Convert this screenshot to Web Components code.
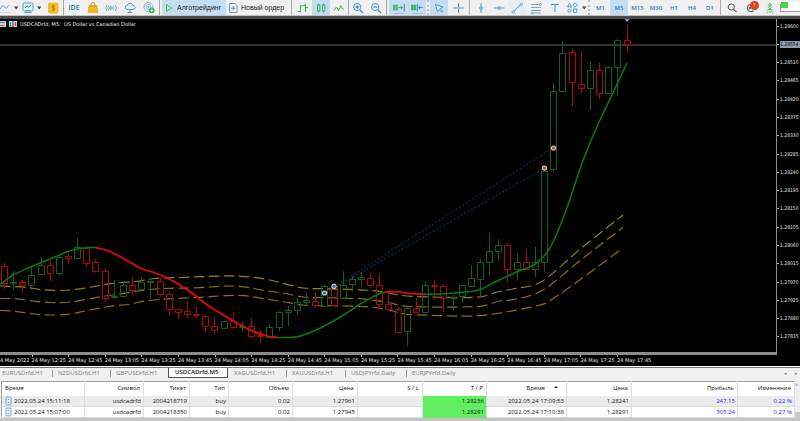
<!DOCTYPE html>
<html lang="ru">
<head>
<meta charset="utf-8">
<title>USDCADrfd, M5</title>
<style>
html,body{margin:0;padding:0}
body{font-family:"Open Sans","Noto Sans",sans-serif;font-size:6px;line-height:8px;background:#f0f0f0;color:#222}
</style>
</head>
<body>
<trade-terminal></trade-terminal>
<script>
const ICONS={
line:`<path d="M-1 9L3 4.5 6 7.500 9 4" fill="none" stroke="#5f9fc8"/><path d="M-1 11.500H10" stroke="#a9c4d6" stroke-width=".7"/>`,
caret:`<path d="M4 5.500h4.400L6.200 8.500z" fill="#444"/>`,
chart:`<rect x="1" y="2" width="10" height="8" rx="1.500" fill="#dff0f6" stroke="#4f9fc4"/><path d="M3 7L5 5 7 6.500 9 4" fill="none" stroke="#3cab62"/><path d="M3.500 9.500h5" stroke="#59b27d"/><path d="M2.500 11.500h7" stroke="#4f9fc4"/>`,
money:`<rect x="1.500" y="2" width="9.500" height="10" rx="1.200" fill="#f3c220" stroke="#e0a80c" stroke-width=".6"/><path d="M7.600 5.100C7 4.400 5 4.400 5 5.700c0 1.400 2.700.9 2.700 2.300C7.700 9.400 5.500 9.400 4.800 8.500M6.300 3.800v6.400" fill="none" stroke="#a9700a" stroke-width=".8"/>`,
bag:`<path d="M2 4.500h8L11 11.500H1z" fill="#f0b41e" stroke="#d99a12" stroke-width=".5"/><path d="M4 6V3.500a2 2 0 0 1 4 0V6" fill="none" stroke="#c98a14" stroke-width=".9"/>`,
signal:`<circle cx="6" cy="7" r="1.300" fill="none" stroke="#4d9ccb" stroke-width=".9"/><path d="M3.800 4.800a3.200 3.200 0 0 0 0 4.400M8.200 4.800a3.200 3.200 0 0 1 0 4.400M1.900 3.800a5 5 0 0 0 0 6.400M10.100 3.800a5 5 0 0 1 0 6.400" fill="none" stroke="#5ba3ce" stroke-width=".8"/>`,
cloud:`<path d="M3 8.500a2.200 2.200 0 0 1 .2-4.300A3 3 0 0 1 8.900 4.500 2 2 0 0 1 9.300 8.500z" fill="#e6f3fa" stroke="#4d9ccb"/><path d="M6 8.500V11M3.500 11.500h5" stroke="#4d9ccb"/>`,
globe:`<circle cx="5.500" cy="6" r="4.500" fill="none" stroke="#6fb0c8" stroke-width=".9"/><circle cx="5.500" cy="6" r="2.500" fill="none" stroke="#6fb0c8" stroke-width=".8"/><circle cx="5.500" cy="6" r="1" fill="#6fb0c8"/><circle cx="8.700" cy="9.300" r="2.900" fill="#35b24f"/><path d="M8.700 7.700v3.200M7.100 9.300h3.200" stroke="#fff" stroke-width=".9"/>`,
play:`<path d="M3.500 3.700L9 7 3.500 10.300z" fill="#ecfaf0" stroke="#2fb252" stroke-width="1"/>`,
order:`<path d="M2.500 2.500h5.500L10 4.500v7H2.500z" fill="#fff" stroke="#4b90bf" stroke-width=".9"/><path d="M6.200 5v4.500M4 7.200h4.500" stroke="#3f86ba"/>`,
bars:`<path d="M3.500 4v7.500M1 10.500h2.500M3.500 5h2.500M8.500 2.500v8.500M6 4.500h2.500M8.500 6.500h2.500" stroke="#3fb457" fill="none"/>`,
candles:`<rect x="2.500" y="4" width="2.400" height="6" fill="none" stroke="#35b24f"/><rect x="7.500" y="4" width="2.400" height="6" fill="none" stroke="#35b24f"/><path d="M3.700 2.500V4M3.700 10v1.500M8.700 2.500V4M8.700 10v1.500" stroke="#35b24f"/>`,
zig:`<path d="M1 9.500L3.500 6 5.500 9.500 8 4.500 9.500 8H11" fill="none" stroke="#4db766"/>`,
zoomin:`<circle cx="5.200" cy="6" r="3.600" fill="#d9ecf7" stroke="#4b98c8"/><path d="M8 9l3.200 3" stroke="#4b98c8" stroke-width="1.300"/><path d="M3.400 6h3.600M5.200 4.200v3.600" stroke="#2e7fb5"/>`,
zoomout:`<circle cx="5.200" cy="6" r="3.600" fill="#e4f1f9" stroke="#4b98c8"/><path d="M8 9l3.200 3" stroke="#4b98c8" stroke-width="1.300"/><path d="M3.400 6h3.600" stroke="#2e7fb5"/>`,
scroll:`<path d="M.5 4h1.500v5H.5zM3 4h1.500v5H3z" fill="#6cc77e" stroke="#35b24f" stroke-width=".8"/><path d="M5.500 6.500H9.500M7.900 4.900L9.500 6.500 7.900 8.100" fill="none" stroke="#35b24f"/><path d="M11.200 3v7.500" stroke="#3c86b8"/><path d="M1 12.500h11" stroke="#9ab8cc" stroke-width=".7"/>`,
shift:`<path d="M.5 4h1.500v5H.5zM3 4h1.500v5H3z" fill="#35b24f" stroke="#35b24f" stroke-width=".8"/><path d="M6.200 3v7.500M7.500 6.500H11.500M9.200 4.800L7.500 6.500 9.200 8.200" fill="none" stroke="#3c86b8"/><path d="M1 12.500h11" stroke="#9ab8cc" stroke-width=".7"/>`,
cursor:`<path d="M2.500 3.500L10 6 7.300 7.500 9.800 10.200 8.500 11.200 6.300 8.600 4.500 10.500z" fill="#d9ecf8" stroke="#3f8fc4" stroke-width=".9"/>`,
cross:`<path d="M6.500 2v10M1.500 7h10" stroke="#5b8fb0"/><circle cx="6.500" cy="7" r="1.100" fill="#9cc6e0"/>`,
vline:`<path d="M6 2v10" stroke="#5b9cc4"/><circle cx="6" cy="7" r="1.500" fill="#8fc0de" stroke="#5b9cc4" stroke-width=".7"/>`,
hline:`<path d="M1 7h10.500" stroke="#5b9cc4"/><circle cx="6.200" cy="7" r="1.500" fill="#8fc0de" stroke="#5b9cc4" stroke-width=".7"/>`,
trend:`<path d="M2 11L10.500 3" stroke="#4b98c8"/><circle cx="2.200" cy="11" r="1.200" fill="#eef6fb" stroke="#4b98c8" stroke-width=".8"/><circle cx="10.300" cy="3.200" r="1.200" fill="#eef6fb" stroke="#4b98c8" stroke-width=".8"/>`,
fibo:`<path d="M1 3.500h10M1 6.500h10M1 9.500h10M2 12h9" stroke="#5ba0cc" stroke-width=".9"/><circle cx="10.500" cy="3.500" r="1" fill="#eef6fb" stroke="#4b98c8" stroke-width=".7"/><circle cx="2" cy="12" r="1" fill="#eef6fb" stroke="#4b98c8" stroke-width=".7"/>`,
text:`<path d="M3 3.500h8M7 3.500V11" stroke="#4b98c8" stroke-width="1.100"/>`,
shapes:`<path d="M3.500 2.300L5.500 5.800h-4z" fill="none" stroke="#4b98c8" stroke-width=".9"/><rect x="7.500" y="2.500" width="3.200" height="3.200" fill="none" stroke="#4b98c8" stroke-width=".9" transform="rotate(45 9.100 4.100)"/><circle cx="3.500" cy="9.700" r="1.600" fill="none" stroke="#4b98c8" stroke-width=".9"/><rect x="7.500" y="8" width="3.300" height="3.300" fill="none" stroke="#4b98c8" stroke-width=".9"/>`,
search:`<circle cx="5.300" cy="6" r="3.100" fill="none" stroke="#555"/><path d="M7.600 8.400L10.500 11" stroke="#555" stroke-width="1.200"/>`,
user:`<path d="M8.500 9.500A3.600 3.600 0 1 1 5 3.500" fill="none" stroke="#666" stroke-width="1.100"/><circle cx="4.800" cy="7" r="1.300" fill="#777"/>`,
level:`<path d="M6 3v3M4 5.500L6 8 8 5.500M3.500 8.500h5" stroke="#47bb5f" fill="none" stroke-width=".9"/><circle cx="6" cy="3.800" r="1.300" fill="none" stroke="#47bb5f" stroke-width=".9"/><path d="M3 9.500v2.500h1.500M5.200 9.500L6.200 12 7.200 9.500M8 9.500v2.500h1.500" stroke="#47bb5f" fill="none" stroke-width=".6"/>`,
doc:`<rect x="2.500" y="1.500" width="7" height="11" rx="1" fill="#f2f9fd" stroke="#4b98c8" stroke-width="1.200"/><path d="M4.700 5h2.600M4.700 9h2.600" stroke="#4b98c8" stroke-width="1.200"/>`,
};
const define=(name,css,html)=>{
  const t=document.createElement('template');
  customElements.define(name,class extends HTMLElement{
    constructor(){super();this.attachShadow({mode:'open'})}
    connectedCallback(){
      t.innerHTML=`<style>${css}</style>${typeof html==='function'?html(this):html}`;
      this.shadowRoot.replaceChildren(t.content.cloneNode(true));
    }
  });
};

define('app-icon',`:host{display:block;width:12px;height:14px;flex:none}svg{display:block;width:100%;height:100%;overflow:visible}`,
  e=>`<svg viewBox="0 0 12 14" aria-hidden="true">${ICONS[e.getAttribute('name')]||''}</svg>`);

define('tool-button',`:host{display:flex;flex:none;width:18px}
:host([w19]){width:19px}:host([w20]){width:20px}:host([w21]){width:21px}:host([w16]){width:16px}:host([w11]){width:11px}:host([w9]){width:9px}:host([w6]){width:6px}
:host([wide]){width:64px}
button{all:unset;box-sizing:border-box;display:flex;align-items:center;justify-content:center;width:100%;color:#2f79ad;font-weight:600;white-space:nowrap}
:host([wide]) button{justify-content:flex-start;gap:2px;padding-left:1px;color:#222;font:7px/14px "Liberation Sans",sans-serif}
:host([active]) button{background:#c3def3}
:host([soft]) button{background:#e4eff8}`,
  e=>`<button type="button" aria-label="${e.getAttribute('label')||e.textContent}">${e.hasAttribute('icon')?`<app-icon name="${e.getAttribute('icon')}"></app-icon>`:''}<slot></slot></button>`);

define('tool-sep',`:host{display:block;flex:none;width:1px;background:#a8a8a8;margin:0 2px 0 1px}
:host([tight]){margin:0}:host([grip]){background:none;border-left:2px dotted #bdbdbd;width:0;margin:0 1px}`,``);

define('tool-bar',`:host{display:flex;align-items:stretch;height:15px;background:#f0f0f0;border-bottom:1px solid #bfc2bf;overflow:hidden}
.ide{font-size:7px}
.note{position:relative;display:flex}
.badge{position:absolute;left:9px;top:1px;width:9px;height:9px;border-radius:5px;background:#e23b24;color:#fff;font:6px/9px "Open Sans",sans-serif;text-align:center}
meter{appearance:none;align-self:center;flex:1;min-width:0;height:8px;border:1px solid #9a9a9a;border-right:0;background:#fff;box-sizing:border-box}
meter::-webkit-meter-inner-element{display:block;height:100%}
meter::-webkit-meter-bar{height:100%;background:#fff;border:0;border-radius:0}
meter::-webkit-meter-optimum-value{background:#44d548;border-radius:0}`,`
<tool-button w11 icon="line" label="Индикаторы"></tool-button><tool-button w9 icon="caret" label="Меню"></tool-button>
<tool-button w16 icon="chart" label="График"></tool-button><tool-button w6 icon="caret" label="Меню"></tool-button>
<tool-button w21 icon="money" label="Счет"></tool-button><tool-sep tight></tool-sep>
<tool-button w20 class="ide">IDE</tool-button><tool-button icon="bag" label="Маркет"></tool-button>
<tool-button icon="signal" label="Сигналы"></tool-button><tool-button w19 icon="cloud" label="Облако"></tool-button>
<tool-button w19 icon="globe" label="VPS"></tool-button><tool-sep></tool-sep>
<tool-button wide active icon="play">Алготрейдинг</tool-button><tool-button wide icon="order">Новый ордер</tool-button>
<tool-sep></tool-sep><tool-button icon="bars" label="Бары"></tool-button><tool-button active icon="candles" label="Свечи"></tool-button>
<tool-button icon="zig" label="Линия"></tool-button><tool-sep tight></tool-sep>
<tool-button icon="zoomin" label="Увеличить"></tool-button><tool-button icon="zoomout" label="Уменьшить"></tool-button><tool-sep></tool-sep>
<tool-button w19 active icon="scroll" label="Автопрокрутка"></tool-button><tool-button active icon="shift" label="Сдвиг"></tool-button>
<tool-sep grip></tool-sep><tool-button active icon="cursor" label="Курсор"></tool-button><tool-button w20 icon="cross" label="Перекрестие"></tool-button>
<tool-sep></tool-sep><tool-button icon="vline" label="Вертикальная линия"></tool-button><tool-button icon="hline" label="Горизонтальная линия"></tool-button>
<tool-button soft icon="trend" label="Трендовая линия"></tool-button><tool-button w19 icon="fibo" label="Фибоначчи"></tool-button>
<tool-button icon="text" label="Текст"></tool-button><tool-button icon="shapes" label="Объекты"></tool-button><tool-button w6 icon="caret" label="Меню"></tool-button>
<tool-sep grip></tool-sep><tool-button w19>M1</tool-button><tool-button active>M5</tool-button><tool-button w19>M15</tool-button><tool-button>M30</tool-button>
<tool-button>H1</tool-button><tool-button>H4</tool-button><tool-button>D1</tool-button><tool-sep></tool-sep>
<tool-button icon="search" label="Поиск"></tool-button>
<span class="note"><tool-button w19 icon="user" label="Уведомления"></tool-button><span class="badge">1</span></span>
<tool-button w20 icon="level" label="Уровень"></tool-button><meter value="36" max="100" aria-label="Соединение"></meter>`);

/* each bar: high, body top, body bottom, low, direction */
const BARS=`262.7 266.3 282.7 288.7 r|271 281.5 282.5 289.7 g|280 281.5 285.3 293 r|266.5 274.5 285.3 286.5 g|257 265 274.3 275 g|261.5 264.5 273.3 281 r|255 256.5 273.3 275.3 g|253.7 256.3 258.3 263.7 r|238 247.3 258.3 258.5 g|247.3 248 263.3 267.3 r|259 262.3 270.7 272.7 r|268.7 271.3 297.7 301.7 r|280 296 297 299 g|281.3 285 296 298 g|277.3 285.3 289.7 294.3 r|277.3 282.3 289.3 289.3 g|281 281.3 282.3 298.3 g|277.3 281.3 294.3 297 r|291.7 294.3 309.3 315.7 r|309 309.3 312 319 r|301.3 311.3 314.3 317.7 r|306.7 314.3 315.3 317.7 r|315 315.7 326.3 331.7 r|317.3 326 330.3 333.7 r|321 321.3 328.3 329 g|312.3 321.3 327.3 329.3 r|321.3 326 327 330.7 g|318.3 326 336 338.7 r|329.3 335 336 343.3 r|324.3 327.3 336.7 336.7 g|311.3 312.3 327.3 331.3 g|305.7 310.3 312.3 326.3 g|298 302.3 310.3 314.3 g|293 300.3 302.3 304.3 g|292.3 301.3 305.3 307.3 r|284.3 286 305.7 306 g|285.3 286.3 305.3 305.7 r|271.3 285.3 298.3 298.3 g|276 279.3 284 291.3 g|272 277.3 279.3 286.7 g|273.3 278.3 285.3 287.3 r|273.3 285 304.3 307.3 r|292 304.3 309.3 311 r|307 309.3 332.3 332.3 r|306 308 331.3 346.3 g|297.7 308 312.3 312.3 r|281.3 285.3 312.3 312.3 g|280 285.3 286.3 300 r|285 286.3 297.7 312.7 r|295 296.5 297.5 310.7 g|285.3 285.3 296.3 302.7 g|265.3 278.3 286.3 286.3 g|258.7 262.3 278.7 297.3 g|233 251.3 262.3 276 g|239.3 245.3 251.3 260.7 g|243.3 245.3 268.7 281.7 r|253.7 262.3 268.7 280.7 g|249.3 262.3 269.3 270.3 r|246.7 262.3 268.7 277.3 g|170 170.7 262.3 271.7 g|83 91.3 169.3 171.3 g|40.7 53.3 90.7 92 g|49 52.3 82.3 106 r|52 84.3 88.3 92.7 r|62.3 70.3 87.7 110.3 g|62.3 70.3 92.7 99 r|66 67.3 92.7 94 g|39 40.3 67.3 95.7 g|25 40.3 44.7 51.7 r`.split('|').map(s=>s.split(' '));
const barSvg=BARS.map(([h,t,b,l,d],i)=>{
  const x=Math.floor(4.4+i*9.156)+.5,T=Math.round(t)+.5,B=Math.max(T+.01,Math.round(b)+.5);
  return `<path class="${d}" d="M${x} ${h}V${T}M${x} ${B}V${l}M${x-3} ${T}H${x+3}V${B}H${x-3}Z"/>`;
}).join('');
const curve=s=>{
  const p=s.split(' ').map(q=>q.split(',').map(Number));let d=`M${p[0]}`;
  for(let i=0;i<p.length-1;i++){
    const a=p[i-1]||p[i],b=p[i],c=p[i+1],e=p[i+2]||c;
    const k=(c[0]-b[0])/3,m1=(c[1]-a[1])/((c[0]-a[0])||1),m2=(e[1]-b[1])/((e[0]-b[0])||1);
    d+=`C${b[0]+k} ${(b[1]+m1*k).toFixed(2)} ${c[0]-k} ${(c[1]-m2*k).toFixed(2)} ${c[0]} ${c[1]}`;
  }
  return d;
};
const UP=['0,284.5 13,275 27,268.5 40,263 55,257 68,251.500 80,248.500 90,247.500 96,247.5','278,337.500 292,337.300 302,335.500 315,330.500 330,323 345,314 360,304 370,298.500 380,293.500 386,292','424,294.300 445,293.800 465,292 480,289.500 497,281 510,275 520,270.500 533,265.500 541,259 547,252.500 553,242 562,221 570,199 581,166 590,143 600,120 611,97 627,63'];
const DOWN=['96,247.7 104,249.500 115,254 128,261 140,268 155,273 166,277.500 178,284 192,293 206,304 220,313 235,322 250,330 265,335.500 278,337.5','386,291.800 400,292 410,293.500 425,294.3'];
const BANDS=[['#94851a','0,286 27,287.500 40,289.500 55,290.500 70,290 85,288 100,285.500 115,283 135,281.500 155,278.500 180,277.500 223,276 238,276 263,278.700 283,283.300 303,288 323,288.700 357,289.700 380,291.300 400,295.300 433,297 480,297 497,292 513,289 535,284.700 547,278 580,249.300 623,215'],
['#8c7010','0,298.500 15,298.700 33,301 50,302.500 70,302 90,298.500 105,296 120,294 135,291.500 155,289 170,288.300 200,287.700 220,286.300 240,286.300 262,290 285,293.500 303,297 325,297.700 357,298.500 372,300 388,302.500 407,306.300 480,306.300 500,301 513,299.700 535,294 547,287.500 580,260.700 623,227.3'],
['#8c7010','0,310.500 15,311.300 35,314 50,315 68,314.300 85,311 100,308 115,305.500 128,304.500 145,301 162,299.300 190,297.700 205,297 225,295.700 245,295.700 265,299 285,302 303,305 330,305.700 357,306.300 370,307 385,309 405,314 430,315.300 475,316 500,313 520,309.300 535,306.300 547,302.500 580,279.700 623,248']];
const mark=(x,y,c)=>`<circle cx="${x}" cy="${y}" r="2.600" fill="#d8d4cc"/><circle cx="${x}" cy="${y}" r="1.600" fill="${c}"/>`;

define('chart-plot',`:host{display:block;position:relative;min-width:0;background:#000;overflow:hidden}
.pic{position:absolute;inset:0;width:100%;height:100%}
.g{fill:none;stroke:#155f1c}.r{fill:none;stroke:#b00808}
.title{position:relative;display:flex;align-items:center;gap:3px;padding:1px 0 0;color:#f0f0f0;font:5px/8px "DejaVu Sans",sans-serif;white-space:pre}
.title svg{width:8px;height:8px}.title svg:first-child{width:6px}`,`
<svg class="pic" viewBox="0 19 776 333" preserveAspectRatio="none" role="img" aria-label="USDCADrfd M5">
<path d="M0 45H776" stroke="#40444c" stroke-width="1.400"/>
${BANDS.map(([c,s])=>`<path d="${curve(s)}" fill="none" stroke="${c}" stroke-width="1.200" stroke-dasharray="10.500 4.500"/>`).join('')}
${barSvg}
<path d="M325 293L545 168M334 287L553 148" stroke="#0d4679" stroke-dasharray="2 2"/>
${UP.map(s=>`<path d="${curve(s)}" fill="none" stroke="#0a7c0a" stroke-width="1.500"/>`).join('')}
${DOWN.map(s=>`<path d="${curve(s)}" fill="none" stroke="#ec0808" stroke-width="1.700"/>`).join('')}
${mark(324.5,293,'#1f6fc0')}${mark(334,286.3,'#1f6fc0')}${mark(544.5,168,'#e0381c')}${mark(553.5,148,'#e0381c')}
<path d="M624 18.500h6l-3 3.500z" fill="#8e9cae"/>
</svg>
<div class="title"><svg viewBox="0 0 6 8" aria-hidden="true"><path d="M0 1h6v6H0z" fill="#e8e8e8"/><path d="M0 2.500h5" stroke="#3b8fd0" stroke-width="1.500"/><path d="M0 5.500h5" stroke="#d0604a" stroke-width="1.500"/></svg><svg viewBox="0 0 8 8" aria-hidden="true"><path d="M0 1h8v6H0z" fill="#dce6ee"/><path d="M1.500 2v5M4 1v3" stroke="#3b8fd0" stroke-width="1.600"/><path d="M4 4v3M6.500 2v4" stroke="#c8412c" stroke-width="1.500"/></svg><span>USDCADrfd, M5:  US Dollar vs Canadian Dollar</span></div>`);

define('price-axis',`:host{display:flex;flex-direction:column;margin-top:-2px;padding-bottom:9px;color:#e4e4e4;font:5px/7px "DejaVu Sans Condensed","DejaVu Sans",sans-serif}
div{flex:1;display:flex;align-items:center}
div::before{content:"";width:2px;height:1px;background:#b0b0b0;margin-right:1px}
.now span{background:#8f9dad;color:#000;flex:1}`,
  ()=>Array.from({length:18},(_,i)=>i===1?`<div class="now"><span>1.28554</span></div>`:`<div><span>${((128600-i*45)/1e5).toFixed(5)}</span></div>`).join(''));

define('time-axis',`:host{display:grid;grid-template-columns:repeat(18,1fr);margin-left:-5px;padding-right:18.300%;color:#e4e4e4;font:5px/8px "DejaVu Sans",sans-serif;white-space:nowrap}
div{position:relative;padding-top:1px}
div:first-of-type{padding-left:5px}
div::before{content:"";position:absolute;left:0;top:0;width:1px;height:2px;background:#b0b0b0}`,
  ()=>Array.from({length:18},(_,i)=>{const m=725+i*20;return `<div>${i?`24 May ${Math.floor(m/60)}:${String(m%60).padStart(2,'0')}`:'4 May 2022'}</div>`}).join(''));

define('chart-view',`:host{flex:1;display:grid;grid-template-columns:minmax(0,1fr) 23px;grid-template-rows:minmax(180px,1fr) 11px;background:#000;border-top:3px solid #484b48;border-bottom:1px solid #fff;overflow:hidden}
chart-plot{border-right:1px solid #8c8c8c;border-bottom:3px solid #8c8c8c}
time-axis{grid-column:1/-1}`,`<chart-plot></chart-plot><price-axis></price-axis><time-axis></time-axis>`);

define('chart-tabs',`:host{display:flex;align-items:stretch;height:10px;border-top:1px solid #77747c;background:#f0f0f0;padding-bottom:3px;color:#7c7c7c;font-size:6px;line-height:10px}
button{all:unset;flex:none;width:58px;box-sizing:border-box;padding-left:6px;white-space:nowrap;position:relative}
button+button:not(.on)::before{content:"";position:absolute;left:0;top:2px;height:7px;width:1px;background:#9b9b9b}
.on{width:60px;background:#fff;color:#111;font-weight:600;border:1px solid #555;border-top:0;border-radius:0 0 1px 1px;line-height:9px}
.first{width:52px;padding-left:2px}
.w59{width:59px}.w61{width:61px}
.on+button::before{display:none}
nav{margin-left:auto;display:flex;gap:8px;padding-right:2px;font-size:5px}`,`
<button class="first">EURUSDrfd,H1</button><button>NZDUSDrfd,H1</button><button>GBPUSDrfd,H1</button><button class="on">USDCADrfd,M5</button><button>XAGUSDrfd,H1</button><button class="w59">XAUUSDrfd,H1</button><button class="w61">USDJPYrfd,Daily</button><button>EURJPYrfd,Daily</button>
<nav><span>◂</span><span>▸</span></nav>`);

const HEAD=['Время','Символ','Тикет','Тип','Объем','Цена','S / L','T / P','Время','Цена','Прибыль','Изменение'];
const ROWS=[['2022.05.24 15:11:18','usdcadrfd','2004218719','buy','0.02','1.27961','','1.28236','2022.05.24 17:09:53','1.28241','247.15','0.22 %'],
['2022.05.24 15:07:00','usdcadrfd','2004218350','buy','0.02','1.27945','','1.28291','2022.05.24 17:10:38','1.28291','305.24','0.27 %']];
define('deals-table',`:host{display:flex;padding-left:1px;background:#f0f0f0;border-bottom:3px solid #c4c4c4}
table{flex:1;width:0;table-layout:fixed;border-collapse:collapse;background:#fff;border-top:1px solid #a0a0a0;border-left:1px solid #a0a0a0}
th,td{padding:0 2px;text-align:right;font-weight:500;white-space:nowrap;border-right:1px solid #dedede;color:#111}
th{height:14px;line-height:13px;padding-right:3px}
td{height:11px;line-height:10px;box-sizing:border-box;border-bottom:1px solid #dcdcdc}
th{box-sizing:border-box}
th:first-child{text-align:left;padding-left:3px}
td:first-child span{display:flex;align-items:center;gap:1px}
td:first-child app-icon{width:9px;height:10px}
tr.a td{background:#ebebeb}
tr td:nth-child(8),tr.a td:nth-child(8){background:#5ff05f;border-bottom-color:#7bdc7b}
td:nth-child(n+11){color:#2a1cf0}
.up{display:inline-block;margin:0 5px 2px 9px;border:2px solid transparent;border-top:0;border-bottom-color:#222}
aside{width:5px;background:#eee;display:flex;flex-direction:column;justify-content:space-between;color:#555;font-size:5px}
aside i{height:6px;background:#c9c9c9}`,`
<table><colgroup>${[83,59,46,39,64,65,65,64,80,65,106,57].map(w=>`<col style="width:${(w/7.93).toFixed(2)}%">`).join('')}</colgroup>
<thead><tr>${HEAD.map((h,i)=>`<th scope="col">${h}${i===8?'<span class="up"></span>':''}</th>`).join('')}</tr></thead>
<tbody>${ROWS.map((r,j)=>`<tr class="${j?'':'a'}">${r.map((c,i)=>`<td>${i?c:`<span><app-icon name="doc"></app-icon>${c}</span>`}</td>`).join('')}</tr>`).join('')}</tbody></table>
<aside><span>^</span><i></i></aside>`);

define('trade-terminal',`:host{display:flex;flex-direction:column;min-height:100vh}`,
`<tool-bar></tool-bar><chart-view></chart-view><chart-tabs></chart-tabs><deals-table></deals-table>`);
</script>
</body>
</html>
